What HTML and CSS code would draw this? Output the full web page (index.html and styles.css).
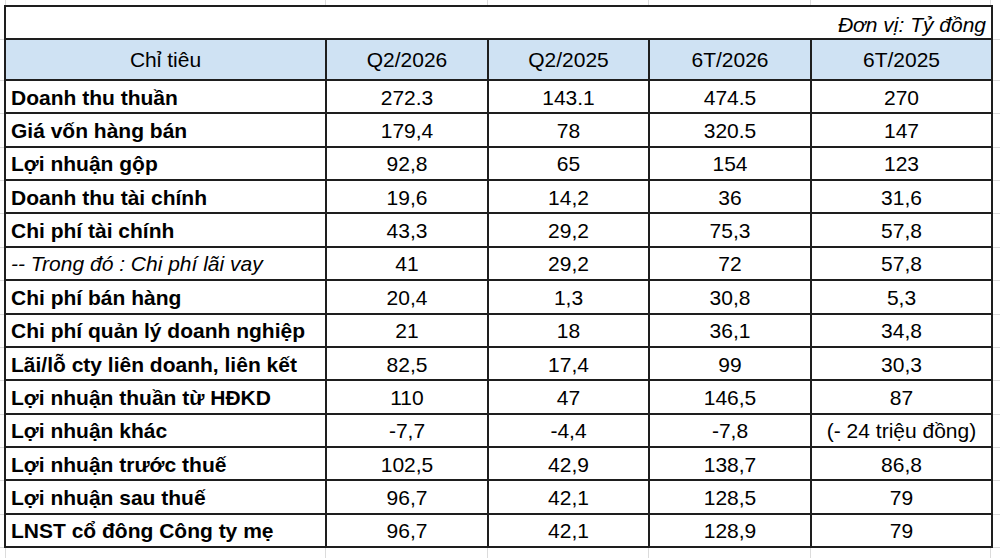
FILE: index.html
```html
<!DOCTYPE html>
<html lang="vi">
<head>
<meta charset="utf-8">
<title>Kết quả kinh doanh</title>
<link rel="stylesheet" href="styles.css">
</head>
<body>
<div class="sheet">
<table class="report">
  <colgroup>
    <col class="c-name">
    <col class="c-q">
    <col class="c-q2">
    <col class="c-q">
    <col class="c-last">
  </colgroup>
  <tbody>
    <tr class="title-row"><td colspan="5" class="unit">Đơn vị: Tỷ đồng</td></tr>
    <tr class="head-row">
      <th>Chỉ tiêu</th><th>Q2/2026</th><th>Q2/2025</th><th>6T/2026</th><th>6T/2025</th>
    </tr>
    <tr><td class="lbl">Doanh thu thuần</td><td>272.3</td><td>143.1</td><td>474.5</td><td>270</td></tr>
    <tr><td class="lbl">Giá vốn hàng bán</td><td>179,4</td><td>78</td><td>320.5</td><td>147</td></tr>
    <tr><td class="lbl">Lợi nhuận gộp</td><td>92,8</td><td>65</td><td>154</td><td>123</td></tr>
    <tr><td class="lbl">Doanh thu tài chính</td><td>19,6</td><td>14,2</td><td>36</td><td>31,6</td></tr>
    <tr><td class="lbl">Chi phí tài chính</td><td>43,3</td><td>29,2</td><td>75,3</td><td>57,8</td></tr>
    <tr><td class="lbl sub">-- Trong đó : Chi phí lãi vay</td><td>41</td><td>29,2</td><td>72</td><td>57,8</td></tr>
    <tr><td class="lbl">Chi phí bán hàng</td><td>20,4</td><td>1,3</td><td>30,8</td><td>5,3</td></tr>
    <tr><td class="lbl">Chi phí quản lý doanh nghiệp</td><td>21</td><td>18</td><td>36,1</td><td>34,8</td></tr>
    <tr><td class="lbl">Lãi/lỗ cty liên doanh, liên kết</td><td>82,5</td><td>17,4</td><td>99</td><td>30,3</td></tr>
    <tr><td class="lbl">Lợi nhuận thuần từ HĐKD</td><td>110</td><td>47</td><td>146,5</td><td>87</td></tr>
    <tr><td class="lbl">Lợi nhuận khác</td><td>-7,7</td><td>-4,4</td><td>-7,8</td><td>(- 24 triệu đồng)</td></tr>
    <tr><td class="lbl">Lợi nhuận trước thuế</td><td>102,5</td><td>42,9</td><td>138,7</td><td>86,8</td></tr>
    <tr><td class="lbl">Lợi nhuận sau thuế</td><td>96,7</td><td>42,1</td><td>128,5</td><td>79</td></tr>
    <tr><td class="lbl">LNST cổ đông Công ty mẹ</td><td>96,7</td><td>42,1</td><td>128,9</td><td>79</td></tr>
  </tbody>
</table>
</div>
</body>
</html>
```
FILE: styles.css
```css
html, body {
  margin: 0;
  padding: 0;
  background: #ffffff;
}

.sheet {
  width: 1000px;
  height: 558px;
  overflow: hidden;
  padding: 5px 0 0 4px;
  box-sizing: border-box;
  background:
    linear-gradient(#dcdcdc, #dcdcdc) 5px 0 / 1px 100% no-repeat,
    linear-gradient(#dcdcdc, #dcdcdc) 325px 0 / 1px 100% no-repeat,
    linear-gradient(#dcdcdc, #dcdcdc) 487px 0 / 1px 100% no-repeat,
    linear-gradient(#dcdcdc, #dcdcdc) 648px 0 / 1px 100% no-repeat,
    linear-gradient(#dcdcdc, #dcdcdc) 810px 0 / 1px 100% no-repeat,
    linear-gradient(#dcdcdc, #dcdcdc) 990px 0 / 1px 100% no-repeat,
    linear-gradient(#dcdcdc, #dcdcdc) 0 39px / 100% 1px no-repeat,
    repeating-linear-gradient(to bottom, #dcdcdc 0, #dcdcdc 1px, transparent 1px, transparent 33.36px) 0 80px / 100% 470px no-repeat,
    #ffffff;
}

.report {
  border-collapse: collapse;
  table-layout: fixed;
  width: 987px;
  background: #ffffff;
  font-family: "Liberation Sans", Arial, sans-serif;
  font-size: 21px;
  color: #000000;
}

.c-name { width: 321px; }
.c-q { width: 162px; }
.c-q2 { width: 161px; }
.c-last { width: 181px; }

.report td,
.report th {
  border: 2px solid #1e1e1e;
  padding: 2px 4px 0;
  text-align: center;
  vertical-align: middle;
  white-space: nowrap;
  overflow: hidden;
  line-height: 24px;
}

.report tr {
  height: 33.36px;
}

.report .title-row {
  height: 33px;
}

.report .unit {
  text-align: right;
  font-style: italic;
  padding: 5px 5px 0 4px;
}

.report .head-row {
  height: 41px;
}

.report .head-row th {
  background: #cfe2f3;
  font-weight: normal;
  padding-top: 0;
}

.report .lbl {
  text-align: left;
  font-weight: bold;
  padding-left: 5px;
}

.report .lbl.sub {
  font-weight: normal;
  font-style: italic;
}
```
